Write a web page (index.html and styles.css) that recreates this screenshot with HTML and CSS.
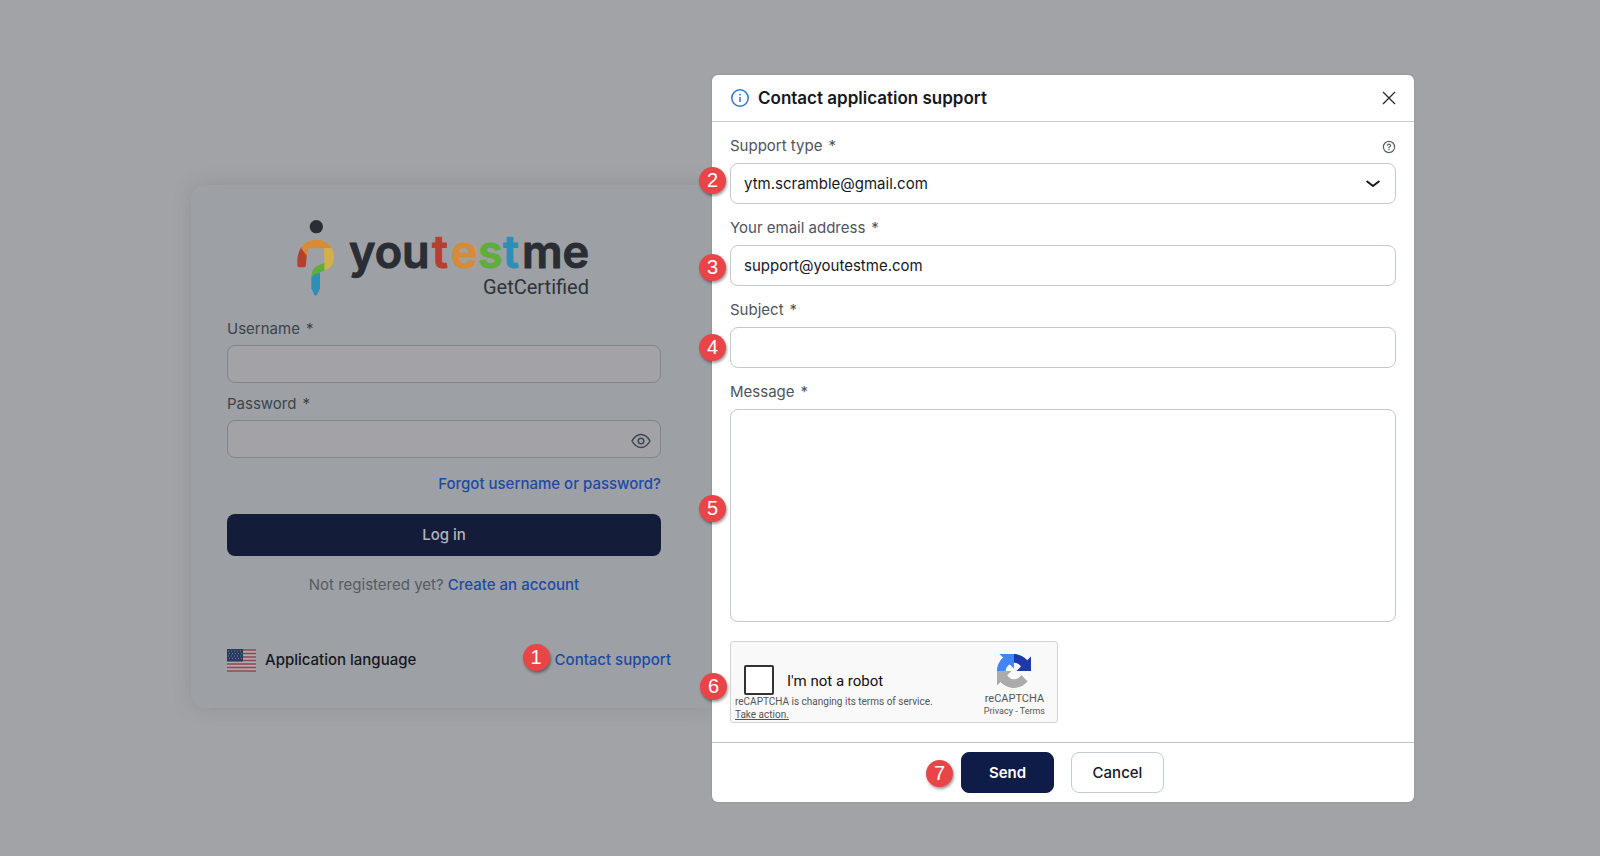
FILE: index.html
```html
<!DOCTYPE html>
<html lang="en">
<head>
  <meta charset="UTF-8">
  <meta name="viewport" content="width=device-width, initial-scale=1.0">
  <title>YouTestMe GetCertified</title>
  <link rel="stylesheet" href="styles.css">
</head>
<body>

  <main class="page">

    <form class="login">
      <svg class="logo" viewBox="0 0 300 80" role="img" aria-label="youtestme GetCertified">
        <g transform="scale(0.3333) translate(-42 -39)">
          <circle cx="109" cy="65" r="20" fill="#2b2d35"/>
          <path fill="#b5402f" d="M64 126Q54 140 52 164V179Q52 187 60 187H69Q78 187 78 179L82 129Z"/>
          <path fill="#d98a35" d="M63 129Q78 104 108 104Q140 104 155 130H82L80 152Z"/>
          <path fill="#d3b148" d="M133 129H154Q162 141 162 155Q162 190 133 196Z"/>
          <path fill="#5fae3a" d="M133 175V197Q118 201 95 217Q92 184 133 175Z"/>
          <path fill="#2d8fb8" d="M94 216Q104 206 120 203V251L111 269Q107 275 103 269L94 250Z"/>
        </g>
        <g class="logo-word">
          <text x="55" y="50" fill="#2b2d35" stroke="#2b2d35">you</text>
          <text x="138" y="50" fill="#b5402f" stroke="#b5402f">t</text>
          <text x="157" y="50" fill="#d98a35" stroke="#d98a35">e</text>
          <text x="184" y="50" fill="#5fae3a" stroke="#5fae3a">s</text>
          <text x="209" y="50" fill="#2d8fb8" stroke="#2d8fb8">t</text>
          <text x="228" y="50" fill="#2b2d35" stroke="#2b2d35">me</text>
        </g>
        <text class="logo-product" x="295" y="76" text-anchor="end">GetCertified</text>
      </svg>

      <div class="login-field">
        <label for="username">Username<span class="req">*</span></label>
        <input id="username" type="text">
      </div>
      <div class="login-field">
        <label for="password">Password<span class="req">*</span></label>
        <div class="control">
          <input id="password" type="password">
          <button class="eye" type="button" aria-label="Show password">
            <svg width="20" height="16" viewBox="0 0 20 16" fill="none" stroke="#3f4650" stroke-width="1.5">
              <path d="M1 8Q4.500 1.500 10 1.500T19 8Q15.500 14.500 10 14.500T1 8Z"/>
              <circle cx="10" cy="8" r="2.800"/>
            </svg>
          </button>
        </div>
      </div>

      <a class="link forgot" href="#">Forgot username or password?</a>
      <button class="login-btn" type="button">Log in</button>
      <p class="register">Not registered yet? <a class="link" href="#">Create an account</a></p>

      <div class="login-footer">
        <button class="language" type="button">
          <svg width="29" height="23" viewBox="0 0 29 23">
            <rect width="29" height="23" rx="2" fill="#b0a8ae"/>
            <path stroke="#8e4650" stroke-width="1.700" d="M0 1H29M0 4.500H29M0 8H29M0 11.500H29M0 15H29M0 18.500H29M0 22H29"/>
            <rect width="16" height="12.500" fill="#283b60"/>
            <path stroke="#6f7d94" stroke-width="1" stroke-dasharray="1 2" d="M1 2H15M2 4.500H15M1 7H15M2 9.500H15"/>
          </svg>
          Application language
        </button>
        <div class="contact">
          <span class="badge badge-1">1</span>
          <a class="link" href="#">Contact support</a>
        </div>
      </div>
    </form>

    <form class="dialog" role="dialog" aria-labelledby="dialog-title">
      <header class="dialog-header">
        <svg width="18" height="18" viewBox="0 0 18 18" fill="none" stroke="#2f73d9" stroke-width="1.500">
          <circle cx="9" cy="9" r="8.200"/>
          <path d="M9 8V13M9 4.800V6.400"/>
        </svg>
        <h1 id="dialog-title">Contact application support</h1>
        <button class="close" type="button" aria-label="Close">
          <svg width="14" height="14" viewBox="0 0 14 14" stroke="#26292e" stroke-width="1.300">
            <path d="M1 1L13 13M13 1L1 13"/>
          </svg>
        </button>
      </header>

      <div class="dialog-body">
        <div class="field">
          <div class="label-row">
            <label for="type">Support type<span class="req">*</span></label>
            <svg width="14" height="14" viewBox="0 0 14 14" fill="none" stroke="#596069" stroke-width="1.200">
              <circle cx="7" cy="7" r="5.600"/>
              <path d="M5.400 5.700Q5.500 4.200 7 4.200T8.600 5.700Q8.600 6.500 7 7.200V8.200M7 9V10.200"/>
            </svg>
          </div>
          <div class="control">
            <span class="badge badge-2">2</span>
            <select id="type">
              <option>ytm.scramble@gmail.com</option>
            </select>
            <svg class="chevron" width="14" height="8" viewBox="0 0 14 8" fill="none" stroke="#15181c" stroke-width="2" stroke-linecap="round" stroke-linejoin="round">
              <path d="M1.200 1.500L7 6L12.800 1.500"/>
            </svg>
          </div>
        </div>

        <div class="field">
          <label for="email">Your email address<span class="req">*</span></label>
          <div class="control">
            <span class="badge badge-3">3</span>
            <input id="email" type="email" value="support@youtestme.com">
          </div>
        </div>

        <div class="field">
          <label for="subject">Subject<span class="req">*</span></label>
          <div class="control">
            <span class="badge badge-4">4</span>
            <input id="subject" type="text">
          </div>
        </div>

        <div class="field">
          <label for="message">Message<span class="req">*</span></label>
          <div class="control">
            <span class="badge badge-5">5</span>
            <textarea id="message"></textarea>
          </div>
        </div>

        <div class="captcha">
          <span class="badge badge-6">6</span>
          <div class="captcha-main">
            <div class="captcha-check">
              <input id="robot" type="checkbox">
              <label for="robot">I'm not a robot</label>
            </div>
            <p class="captcha-notice">reCAPTCHA is changing its terms of service.<br><a href="#">Take action.</a></p>
          </div>
          <div class="captcha-brand">
            <svg width="34" height="34" viewBox="0 0 64 64">
              <path fill="#1c3aa9" d="M64 31.955l-.033-1.370V4.687l-7.160 7.160C50.948 4.674 42.033.093 32.050.093c-10.400 0-19.622 4.960-25.458 12.640l11.736 11.860a15.550 15.550 0 0 1 4.754-5.334c2.050-1.600 4.952-2.906 8.968-2.906.485 0 .860.057 1.135.163 4.976.393 9.288 3.140 11.828 7.124l-8.307 8.307L64 31.953"/>
              <path fill="#4285f4" d="M31.862.094l-1.370.033H4.594l7.160 7.160C4.580 13.147 0 22.060 0 32.046c0 10.400 4.960 19.622 12.640 25.458L24.500 45.768a15.550 15.550 0 0 1-5.334-4.754c-1.600-2.050-2.906-4.952-2.906-8.968 0-.485.057-.860.163-1.135.393-4.976 3.140-9.288 7.124-11.828l8.307 8.307L31.860.095"/>
              <path fill="#ababab" d="M.001 32.045l.033 1.370v25.898l7.160-7.160c5.860 7.173 14.774 11.754 24.760 11.754 10.400 0 19.622-4.960 25.458-12.640l-11.736-11.860a15.550 15.550 0 0 1-4.754 5.334c-2.050 1.600-4.952 2.906-8.968 2.906-.485 0-.860-.057-1.135-.163-4.976-.393-9.288-3.140-11.828-7.124l8.307-8.307c-10.522.040-22.400.066-27.295-.005"/>
            </svg>
            <div class="captcha-name">reCAPTCHA</div>
            <div class="captcha-links"><a href="#">Privacy</a> - <a href="#">Terms</a></div>
          </div>
        </div>
      </div>

      <footer class="dialog-footer">
        <div class="send-wrap">
          <span class="badge badge-7">7</span>
          <button class="btn btn-primary" type="button">Send</button>
        </div>
        <button class="btn" type="button">Cancel</button>
      </footer>
    </form>

  </main>

</body>
</html>
```

FILE: styles.css
```css
* { box-sizing: border-box; }
body {
  margin: 0;
  min-height: 100vh;
  background: #a2a3a7;
  color: #15181f;
  font-family: Inter, "Liberation Sans", sans-serif;
  font-size: 15px;
  line-height: 20px;
}
button, input, select, textarea { font: inherit; color: inherit; }
button { cursor: pointer; }
svg { display: block; flex: none; }
label { display: block; }
p { margin: 0; }

.page {
  display: flex;
  justify-content: center;
  align-items: flex-start;
  padding: 75px 16px 54px 21px;
}
.control { position: relative; }
.link { color: #1d4aa6; font-weight: 500; text-decoration: none; }
.req { margin-left: 6px; }

/* login card, dimmed; its right side runs up to the dialog */
.login {
  flex: 0 1 521px;
  margin-top: 110px;
  padding: 33px 51px 36px 36px;
  border-radius: 14px 0 0 14px;
  background: #9da0a4;
  box-shadow: 0 0 18px rgba(90, 98, 108, 0.25);
}
.logo { width: 300px; height: 80px; margin: 0 auto 21px; }
.logo-word {
  font-family: Inter, sans-serif;
  font-size: 45px;
  font-weight: 600;
  stroke-width: 1;
  stroke-linejoin: round;
}
.logo-product {
  font-family: Roboto, sans-serif;
  font-size: 20px;
  fill: #2f333b;
}
.login-field { margin-bottom: 11px; color: #3c434c; }
.login-field label { margin-bottom: 6px; }
.login-field input {
  display: block;
  width: 100%;
  height: 38px;
  padding: 0 40px 0 14px;
  border: 1px solid #7f858d;
  border-radius: 8px;
  background: #a3a3a7;
}
.eye {
  position: absolute;
  top: 13px;
  right: 10px;
  padding: 0;
  border: 0;
  background: none;
}
.forgot { display: block; margin-top: 16px; text-align: right; }
.login-btn {
  display: block;
  width: 100%;
  height: 42px;
  margin: 20px 0 19px;
  border: 0;
  border-radius: 8px;
  background: #131c38;
  color: #b3b4b9;
  font-weight: 500;
}
.register { text-align: center; color: #555b63; }
.login-footer {
  display: flex;
  justify-content: space-between;
  align-items: center;
  height: 24px;
  margin: 53px -10px 0 0;
}
.language {
  display: flex;
  align-items: center;
  gap: 9px;
  padding: 0;
  border: 0;
  background: none;
  font-weight: 500;
}
.contact { position: relative; }

/* numbered callouts */
.badge {
  position: absolute;
  z-index: 2;
  left: -31px;
  width: 27px;
  height: 27px;
  border-radius: 50%;
  background: #e94549;
  box-shadow: 1px 2px 3px rgba(0, 0, 0, 0.4);
  color: #fff;
  font: 20px/26px "Liberation Sans", Arial, sans-serif;
  text-align: center;
}
.badge-1 { top: -6px; left: -32px; }
.badge-2 { top: 4px; }
.badge-3 { top: 9px; }
.badge-4 { top: 7px; }
.badge-5 { top: 86px; }
.badge-6 { top: 31px; }
.badge-7 { top: 8px; left: -35px; }

/* support dialog */
.dialog {
  flex: 0 1 702px;
  position: relative;
  border-radius: 6px;
  background: #fff;
  box-shadow: 0 0 2px rgba(60, 66, 74, 0.25);
}
.dialog-header {
  display: flex;
  align-items: center;
  gap: 9px;
  height: 47px;
  padding: 0 18px 0 19px;
  border-bottom: 1px solid #c5cad1;
}
.dialog-header h1 {
  flex: 1;
  margin: 0;
  font-size: 17px;
  font-weight: 600;
}
.close { padding: 0; border: 0; background: none; }
.dialog-body { padding: 14px 18px 19px; }
.field { margin-bottom: 14px; }
.field label { margin-bottom: 7px; color: #4d545d; }
.label-row { display: flex; justify-content: space-between; }
.label-row svg { margin-top: 4px; }
.field input, .field select, .field textarea {
  display: block;
  width: 100%;
  height: 41px;
  padding: 0 13px;
  border: 1px solid #c3c8cf;
  border-radius: 8px;
  background: #fff;
}
.field select { appearance: none; }
.field textarea {
  height: 213px;
  padding: 10px 13px;
  resize: none;
}
.chevron {
  position: absolute;
  top: 17px;
  right: 16px;
  pointer-events: none;
}

.captcha {
  position: relative;
  display: flex;
  justify-content: space-between;
  width: 328px;
  height: 82px;
  margin-top: 19px;
  border: 1px solid #d3d3d3;
  border-radius: 3px;
  background: #f9f9f9;
  color: #555;
  font-family: Roboto, sans-serif;
}
.captcha-main { padding: 23px 0 0 4px; }
.captcha-check {
  display: flex;
  align-items: center;
  gap: 13px;
  padding-left: 9px;
}
.captcha-check input {
  appearance: none;
  width: 30px;
  height: 30px;
  margin: 0;
  border: 2px solid #333;
  border-radius: 2px;
  background: #fff;
}
.captcha-check label { padding-top: 2px; color: #111; }
.captcha-notice { font-size: 10px; line-height: 13px; }
.captcha a { color: inherit; }
.captcha-brand {
  display: flex;
  flex-direction: column;
  align-items: center;
  padding: 12px 12px 0 0;
}
.captcha-name { margin-top: 4px; font-size: 11px; line-height: 13px; }
.captcha-links { font-size: 9px; line-height: 13px; }
.captcha-links a { text-decoration: none; }

.dialog-footer {
  display: flex;
  justify-content: center;
  gap: 17px;
  padding: 9px 10px 9px 9px;
  border-top: 1px solid #bac6cc;
}
.send-wrap { position: relative; }
.btn {
  width: 93px;
  height: 41px;
  border: 1px solid #c3ccd1;
  border-radius: 8px;
  background: #fff;
  font-weight: 500;
}
.btn-primary {
  border-color: #0f1c47;
  background: #0f1c47;
  color: #fff;
  font-weight: 600;
}
```
